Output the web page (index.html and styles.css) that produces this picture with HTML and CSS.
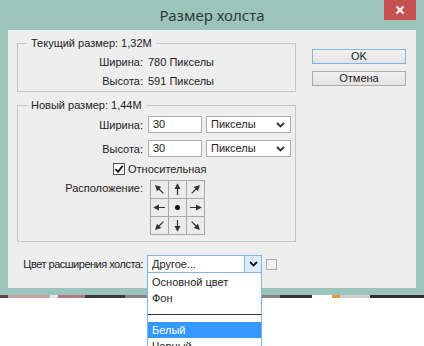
FILE: index.html
```html
<!DOCTYPE html>
<html lang="ru">
<head>
    <meta charset="UTF-8">
    <title>Размер холста</title>
    <link rel="stylesheet" href="styles.css">
</head>
<body>
    <svg class="defs" width="0" height="0">
        <symbol id="arrow" viewBox="0 0 17 17">
            <line x1="8.5" y1="14" x2="8.5" y2="6" stroke="currentColor" stroke-width="1.2"/>
            <polygon points="8.5,2.2 5.5,8 11.5,8" fill="currentColor"/>
        </symbol>
        <symbol id="chevron" viewBox="0 0 9 6">
            <polyline points="1,1 4.5,4.5 8,1" fill="none" stroke="currentColor" stroke-width="1.8"/>
        </symbol>
    </svg>

    <div class="window">
        <div class="titlebar">
            <span></span>
            <h1 class="title">Размер холста</h1>
            <button class="close">
                <svg width="10" height="10" viewBox="0 0 10 10">
                    <path d="M1.5 1.5 L8.5 8.5 M8.5 1.5 L1.5 8.5" stroke="#fff" stroke-width="2"/>
                </svg>
            </button>
        </div>

        <div class="dialog">
            <div class="main">
                <fieldset class="group group-current">
                    <legend>Текущий размер: 1,32M</legend>
                    <div class="info-row"><span class="label">Ширина:</span><span>780 Пикселы</span></div>
                    <div class="info-row"><span class="label">Высота:</span><span>591 Пикселы</span></div>
                </fieldset>

                <fieldset class="group group-new">
                    <legend>Новый размер: 1,44M</legend>
                    <div class="field-row">
                        <span class="label">Ширина:</span>
                        <span class="input">30</span>
                        <span class="select">Пикселы<svg class="chev"><use href="#chevron"/></svg></span>
                    </div>
                    <div class="field-row">
                        <span class="label">Высота:</span>
                        <span class="input">30</span>
                        <span class="select">Пикселы<svg class="chev"><use href="#chevron"/></svg></span>
                    </div>
                    <label class="check">
                        <span class="box">
                            <svg width="10" height="10" viewBox="0 0 10 10">
                                <polyline points="1.5,5 4,7.8 8.7,1.8" fill="none" stroke="#111" stroke-width="1.8"/>
                            </svg>
                        </span>
                        Относительная
                    </label>
                    <div class="anchor-row">
                        <span class="label">Расположение:</span>
                        <div class="anchor">
                            <span class="cell"><svg><use href="#arrow" transform="rotate(-45 8.5 8.5)"/></svg></span>
                            <span class="cell"><svg><use href="#arrow"/></svg></span>
                            <span class="cell"><svg><use href="#arrow" transform="rotate(45 8.5 8.5)"/></svg></span>
                            <span class="cell"><svg><use href="#arrow" transform="rotate(-90 8.5 8.5)"/></svg></span>
                            <span class="cell"><span class="dot"></span></span>
                            <span class="cell"><svg><use href="#arrow" transform="rotate(90 8.5 8.5)"/></svg></span>
                            <span class="cell"><svg><use href="#arrow" transform="rotate(-135 8.5 8.5)"/></svg></span>
                            <span class="cell"><svg><use href="#arrow" transform="rotate(180 8.5 8.5)"/></svg></span>
                            <span class="cell"><svg><use href="#arrow" transform="rotate(135 8.5 8.5)"/></svg></span>
                        </div>
                    </div>
                </fieldset>

                <div class="ext-row">
                    <span class="label">Цвет расширения холста:</span>
                    <div class="combo">
                        <span class="combo-text">Другое...</span>
                        <span class="combo-btn"><svg class="chev"><use href="#chevron"/></svg></span>
                        <ul class="dropdown">
                            <li>Основной цвет</li>
                            <li>Фон</li>
                            <li class="sep"></li>
                            <li class="selected">Белый</li>
                            <li>Черный</li>
                        </ul>
                    </div>
                    <span class="swatch"></span>
                </div>
            </div>

            <div class="buttons">
                <button class="btn btn-default">OK</button>
                <button class="btn">Отмена</button>
            </div>
        </div>
    </div>
    <div class="desk-strip"></div>
</body>
</html>
```

FILE: styles.css
```css
:root {
    --frame: #9cc4ba;
    --panel: #eeeeee;
    --text: #222222;
    --group-line: #c6c6c6;
    --field-line: #abadb3;
    --focus: #7eb4ea;
    --focus-bg: #dcecfc;
    --highlight: #3399ff;
}

* {
    box-sizing: border-box;
    margin: 0;
    padding: 0;
}

body {
    width: 424px;
    height: 346px;
    overflow: hidden;
    background: #ffffff;
    font-family: 'Liberation Sans', Arial, sans-serif;
    font-size: 11px;
    color: var(--text);
}

.defs {
    position: absolute;
}

.window {
    background: var(--frame);
    padding: 0 8px 7px;
}

.titlebar {
    height: 30px;
    display: grid;
    grid-template-columns: 1fr auto 1fr;
}

.title {
    font-family: 'Noto Sans', 'Open Sans', sans-serif;
    font-weight: normal;
    font-size: 15px;
    line-height: 30px;
    color: #2e3b3a;
}

.close {
    justify-self: end;
    width: 32px;
    height: 20px;
    border: none;
    background: #c75050;
    display: flex;
    align-items: center;
    justify-content: center;
}

.dialog {
    height: 258px;
    background: var(--panel);
    display: flex;
    gap: 16px;
    padding: 6px 0 0 9px;
}

.main {
    width: 279px;
    display: flex;
    flex-direction: column;
}

.group {
    border: 1px solid var(--group-line);
    padding: 0;
}

.group legend {
    margin-left: 9px;
    padding: 0 4px;
    line-height: 14px;
}

.label {
    text-align: right;
    white-space: nowrap;
}

.info-row {
    display: grid;
    grid-template-columns: 125px auto;
    column-gap: 5px;
    line-height: 19px;
}

.group-current {
    padding-top: 3px;
}

.group-new {
    margin-top: 6px;
    padding: 4px 0 6px;
    display: flex;
    flex-direction: column;
}

.field-row {
    display: grid;
    grid-template-columns: 125px 54px 84px;
    column-gap: 5px;
    height: 17px;
    align-items: center;
    margin-bottom: 7px;
}

.field-row + .field-row {
    margin-bottom: 5px;
}

.input,
.select {
    height: 17px;
    line-height: 15px;
    border: 1px solid var(--field-line);
    background: #ffffff;
    padding-left: 4px;
}

.select {
    margin-left: -1px;
    display: flex;
    justify-content: space-between;
    align-items: center;
    padding-right: 5px;
}

.chev {
    width: 9px;
    height: 6px;
    color: #333333;
}

.check {
    display: flex;
    align-items: center;
    gap: 3px;
    height: 13px;
    padding-left: 95px;
    margin-bottom: 5px;
}

.box {
    width: 12px;
    height: 12px;
    border: 1px solid #555555;
    background: #ffffff;
    display: flex;
    align-items: center;
    justify-content: center;
}

.anchor-row {
    display: grid;
    grid-template-columns: 125px auto;
    column-gap: 7px;
    align-items: start;
}

.anchor-row .label {
    line-height: 14px;
    padding-top: 1px;
}

.anchor {
    display: grid;
    grid-template-columns: repeat(3, 17px);
    grid-auto-rows: 17px;
    gap: 1px;
    padding: 1px;
    width: 55px;
    background: #a8a8a8;
}

.cell {
    background: #ececec;
    display: flex;
    align-items: center;
    justify-content: center;
    color: #333333;
}

.cell svg {
    width: 17px;
    height: 17px;
}

.dot {
    width: 5px;
    height: 5px;
    border-radius: 50%;
    background: #111111;
}

.ext-row {
    margin-top: 13px;
    display: grid;
    grid-template-columns: 126px 115px 11px;
    column-gap: 4px;
    align-items: center;
}

.ext-row .label {
    justify-self: end;
    letter-spacing: -0.5px;
}

.combo {
    position: relative;
    height: 18px;
    border: 1px solid var(--focus);
    background: #ffffff;
    display: flex;
}

.combo-text {
    flex: 1;
    padding-left: 4px;
    line-height: 16px;
}

.combo-btn {
    width: 17px;
    border-left: 1px solid var(--focus);
    background: var(--focus-bg);
    display: flex;
    align-items: center;
    justify-content: center;
}

.combo-btn .chev {
    color: #111111;
}

.dropdown {
    position: absolute;
    top: 17px;
    left: -1px;
    width: 115px;
    list-style: none;
    background: #ffffff;
    border: 1px solid var(--focus);
    border-top: none;
    padding-top: 1px;
}

.dropdown li {
    height: 16px;
    line-height: 16px;
    padding-left: 4px;
}

.dropdown .sep {
    display: flex;
    align-items: center;
    padding: 0;
}

.dropdown .sep::after {
    content: "";
    flex: 1;
    border-top: 1px solid #333333;
}

.dropdown .selected {
    background: var(--highlight);
    color: #ffffff;
}

.swatch {
    width: 11px;
    height: 11px;
    border: 1px solid #adadad;
    background: #f2f2f2;
}

.buttons {
    width: 94px;
    padding-top: 13px;
    display: flex;
    flex-direction: column;
    gap: 7px;
}

.btn {
    height: 15px;
    font-family: inherit;
    font-size: 11px;
    line-height: 13px;
    color: var(--text);
    border: 1px solid #acacac;
    background: linear-gradient(#f2f2f2, #e3e3e3);
}

.btn-default {
    border-color: var(--focus);
}

.desk-strip {
    height: 3px;
    background: linear-gradient(90deg, #5a4a4a 0 8px, #c9a5a5 8px 50px, #e6e6e6 50px 58px, #b07a80 58px 85px, #3a3a3a 85px 125px, #8a8080 125px 280px, #333333 280px 312px, #ffffff 312px 332px, #e39a3a 332px 340px, #cfcfcf 340px 370px, #2f2f2f 370px);
}
```
